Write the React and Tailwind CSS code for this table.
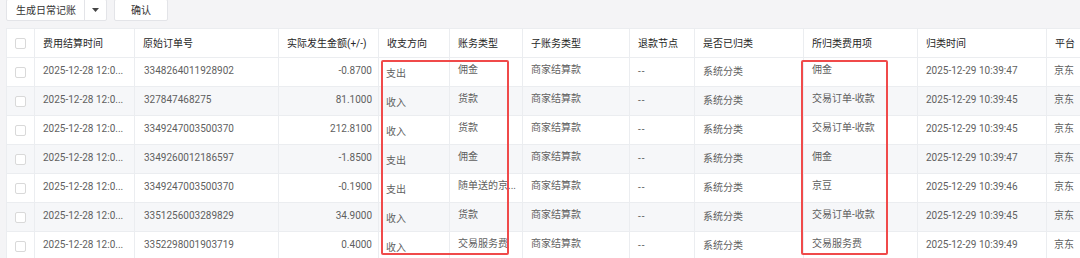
import React from 'react';

const columns = [
  { key: 'check', title: '', w: 28 },
  { key: 'time', title: '费用结算时间', w: 100 },
  { key: 'order', title: '原始订单号', w: 144 },
  { key: 'amount', title: '实际发生金额(+/-)', w: 100 },
  { key: 'dir', title: '收支方向', w: 71 },
  { key: 'type', title: '账务类型', w: 73 },
  { key: 'sub', title: '子账务类型', w: 107 },
  { key: 'refund', title: '退款节点', w: 65 },
  { key: 'classified', title: '是否已归类', w: 109 },
  { key: 'item', title: '所归类费用项', w: 114 },
  { key: 'ctime', title: '归类时间', w: 129 },
  { key: 'platform', title: '平台', w: 80 },
];

const rows = [
  { order: '3348264011928902', amount: '-0.8700', dir: '支出', type: '佣金', item: '佣金', ctime: '2025-12-29 10:39:47' },
  { order: '327847468275', amount: '81.1000', dir: '收入', type: '货款', item: '交易订单-收款', ctime: '2025-12-29 10:39:45' },
  { order: '3349247003500370', amount: '212.8100', dir: '收入', type: '货款', item: '交易订单-收款', ctime: '2025-12-29 10:39:45' },
  { order: '3349260012186597', amount: '-1.8500', dir: '支出', type: '佣金', item: '佣金', ctime: '2025-12-29 10:39:47' },
  { order: '3349247003500370', amount: '-0.1900', dir: '支出', type: '随单送的京...', item: '京豆', ctime: '2025-12-29 10:39:46' },
  { order: '3351256003289829', amount: '34.9000', dir: '收入', type: '货款', item: '交易订单-收款', ctime: '2025-12-29 10:39:45' },
  { order: '3352298001903719', amount: '0.4000', dir: '收入', type: '交易服务费', item: '交易服务费', ctime: '2025-12-29 10:39:49' },
];

const Checkbox = () => (
  <span className="block w-[11px] h-[11px] rounded-[2px] border border-[#d9d9d9] bg-white" />
);

const gridCols =
  'grid-cols-[28px_100px_144px_100px_71px_73px_107px_65px_109px_114px_129px_80px]';

const cell = 'border-r border-b border-[#ebedf0] text-[#5f5f5f] whitespace-nowrap overflow-hidden leading-[16px]';

export default function App() {
  return (
    <div
      className="relative w-[1080px] h-[258px] overflow-hidden bg-[#f4f4f6] text-[10px]"
      style={{ fontFamily: 'Roboto, "Noto Sans CJK SC", sans-serif' }}
    >
      {/* Toolbar */}
      <div className="flex items-center gap-[7px] pl-[6px] h-[22px] -mt-[1px]">
        <div className="flex h-[22px] bg-white border border-[#e3e4e8] rounded-[2px]">
          <span className="flex items-center pl-[9px] pr-[8px] text-[#333]">生成日常记账</span>
          <span className="flex items-center justify-center w-[22px] border-l border-[#e3e4e8]">
            <svg width="7" height="4" viewBox="0 0 7 4">
              <path d="M0 0h7L3.5 4z" fill="#444" />
            </svg>
          </span>
        </div>
        <div className="flex items-center justify-center h-[22px] w-[54px] bg-white border border-[#e3e4e8] rounded-[2px] text-[#333]">
          确认
        </div>
      </div>

      {/* Table */}
      <div className="mt-[7px] ml-[6px] w-[1120px] bg-white border-t border-l border-[#ebedf0]">
        <div className={`grid ${gridCols} h-[29px] bg-white`}>
          {columns.map((c) => (
            <div
              key={c.key}
              className={`flex items-center border-r border-b border-[#ebedf0] text-[#262626] whitespace-nowrap overflow-hidden ${
                c.key === 'check' ? 'justify-center' : 'px-[8px]'
              }`}
            >
              {c.key === 'check' ? <Checkbox /> : c.title}
            </div>
          ))}
        </div>

        {rows.map((r, i) => (
          <div
            key={i}
            className={`grid ${gridCols} h-[29px] ${i % 2 === 1 ? 'bg-[#f6f7f9]' : 'bg-white'}`}
          >
            <div className="flex items-center justify-center border-r border-b border-[#ebedf0]">
              <Checkbox />
            </div>
            <div className={`${cell} pt-[5px] px-[8px]`}>2025-12-28 12:0...</div>
            <div className={`${cell} pt-[5px] px-[9px]`}>{r.order}</div>
            <div className={`${cell} pt-[5px] pr-[6px] text-right`}>{r.amount}</div>
            <div className={`${cell} pt-[8px] px-[7px]`}>{r.dir}</div>
            <div className={`${cell} pt-[4px] px-[8px]`}>{r.type}</div>
            <div className={`${cell} pt-[4px] px-[8px]`}>商家结算款</div>
            <div className={`${cell} pt-[6px] px-[8px] tracking-[1px]`}>--</div>
            <div className={`${cell} pt-[6px] px-[8px]`}>系统分类</div>
            <div className={`${cell} pt-[4px] px-[8px]`}>{r.item}</div>
            <div className={`${cell} pt-[5px] px-[8px]`}>{r.ctime}</div>
            <div className={`${cell} pt-[5px] px-[7px]`}>京东</div>
          </div>
        ))}
      </div>

      {/* Annotation boxes */}
      <div className="absolute left-[381px] top-[60px] w-[128px] h-[195px] border-2 border-[#f04a4a] rounded-[2px]" />
      <div className="absolute left-[801px] top-[60px] w-[87px] h-[195px] border-2 border-[#f04a4a] rounded-[2px]" />
    </div>
  );
}
